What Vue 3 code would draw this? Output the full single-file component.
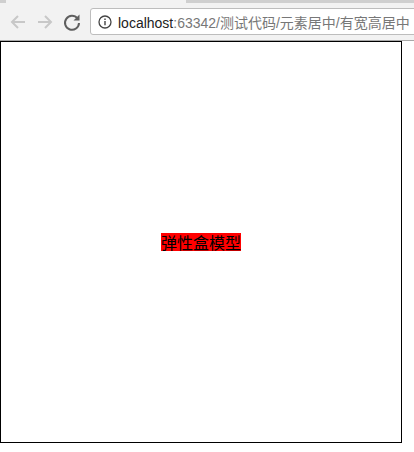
<template>
  <div class="page">
    <div class="tabstrip">
      <div class="tab"></div>
    </div>
    <div class="toolbar">
      <svg class="nav" width="20" height="20" viewBox="0 0 20 20">
        <path d="M17 10H4M10 4l-6 6 6 6" fill="none" stroke="#c8c8c8" stroke-width="2" />
      </svg>
      <svg class="nav" width="20" height="20" viewBox="0 0 20 20">
        <path d="M3 10h13M10 4l6 6-6 6" fill="none" stroke="#c8c8c8" stroke-width="2" />
      </svg>
      <svg class="nav" width="20" height="20" viewBox="0 0 20 20">
        <path d="M15.5 6.5A7 7 0 1 0 17 11" fill="none" stroke="#5f5f5f" stroke-width="2" />
        <path d="M17.5 2.5v6h-6z" fill="#5f5f5f" />
      </svg>
      <div class="omnibox">
        <svg class="info" width="14" height="14" viewBox="0 0 14 14">
          <circle cx="7" cy="7" r="6" fill="none" stroke="#444" stroke-width="1.3" />
          <path d="M7 6v4.2M7 3.6v1.3" stroke="#444" stroke-width="1.4" />
        </svg>
        <span class="url"><span class="host">localhost</span>:63342/测试代码/元素居中/有宽高居中</span>
      </div>
    </div>
    <div class="box">
      <div class="item">弹性盒模型</div>
    </div>
  </div>
</template>

<script setup>
</script>

<style>
html, body {
  background: #fff;
  overflow: hidden;
}
</style>

<style scoped>
.page {
  width: 414px;
  height: 452px;
  overflow: hidden;
}
.tabstrip {
  height: 3px;
  background: #cfcfcf;
  padding-left: 6px;
}
.tab {
  width: 180px;
  height: 3px;
  background: #f2f2f2;
}
.toolbar {
  height: 38px;
  box-sizing: border-box;
  background: #f2f2f2;
  border-bottom: 1px solid #a8a8a8;
  display: flex;
  align-items: center;
  gap: 7px;
  padding-left: 8px;
}
.omnibox {
  flex: 1;
  min-width: 0;
  height: 27px;
  margin-left: 1px;
  margin-right: -10px;
  box-sizing: border-box;
  background: #fff;
  border: 1px solid #bdbdbd;
  border-radius: 3px;
  display: flex;
  align-items: center;
  gap: 6px;
  padding-left: 7px;
  overflow: hidden;
}
.info {
  flex: none;
}
.url {
  font: 14px "Liberation Sans", "Noto Sans CJK SC", sans-serif;
  color: #777;
  white-space: nowrap;
}
.host {
  color: #222;
}
.box {
  width: 400px;
  height: 400px;
  border: 1px solid #000;
  display: flex;
  justify-content: center;
  align-items: center;
}
.item {
  background: #f00;
  color: #000;
  font: 16px/18px "Noto Sans CJK SC", sans-serif;
}
</style>
